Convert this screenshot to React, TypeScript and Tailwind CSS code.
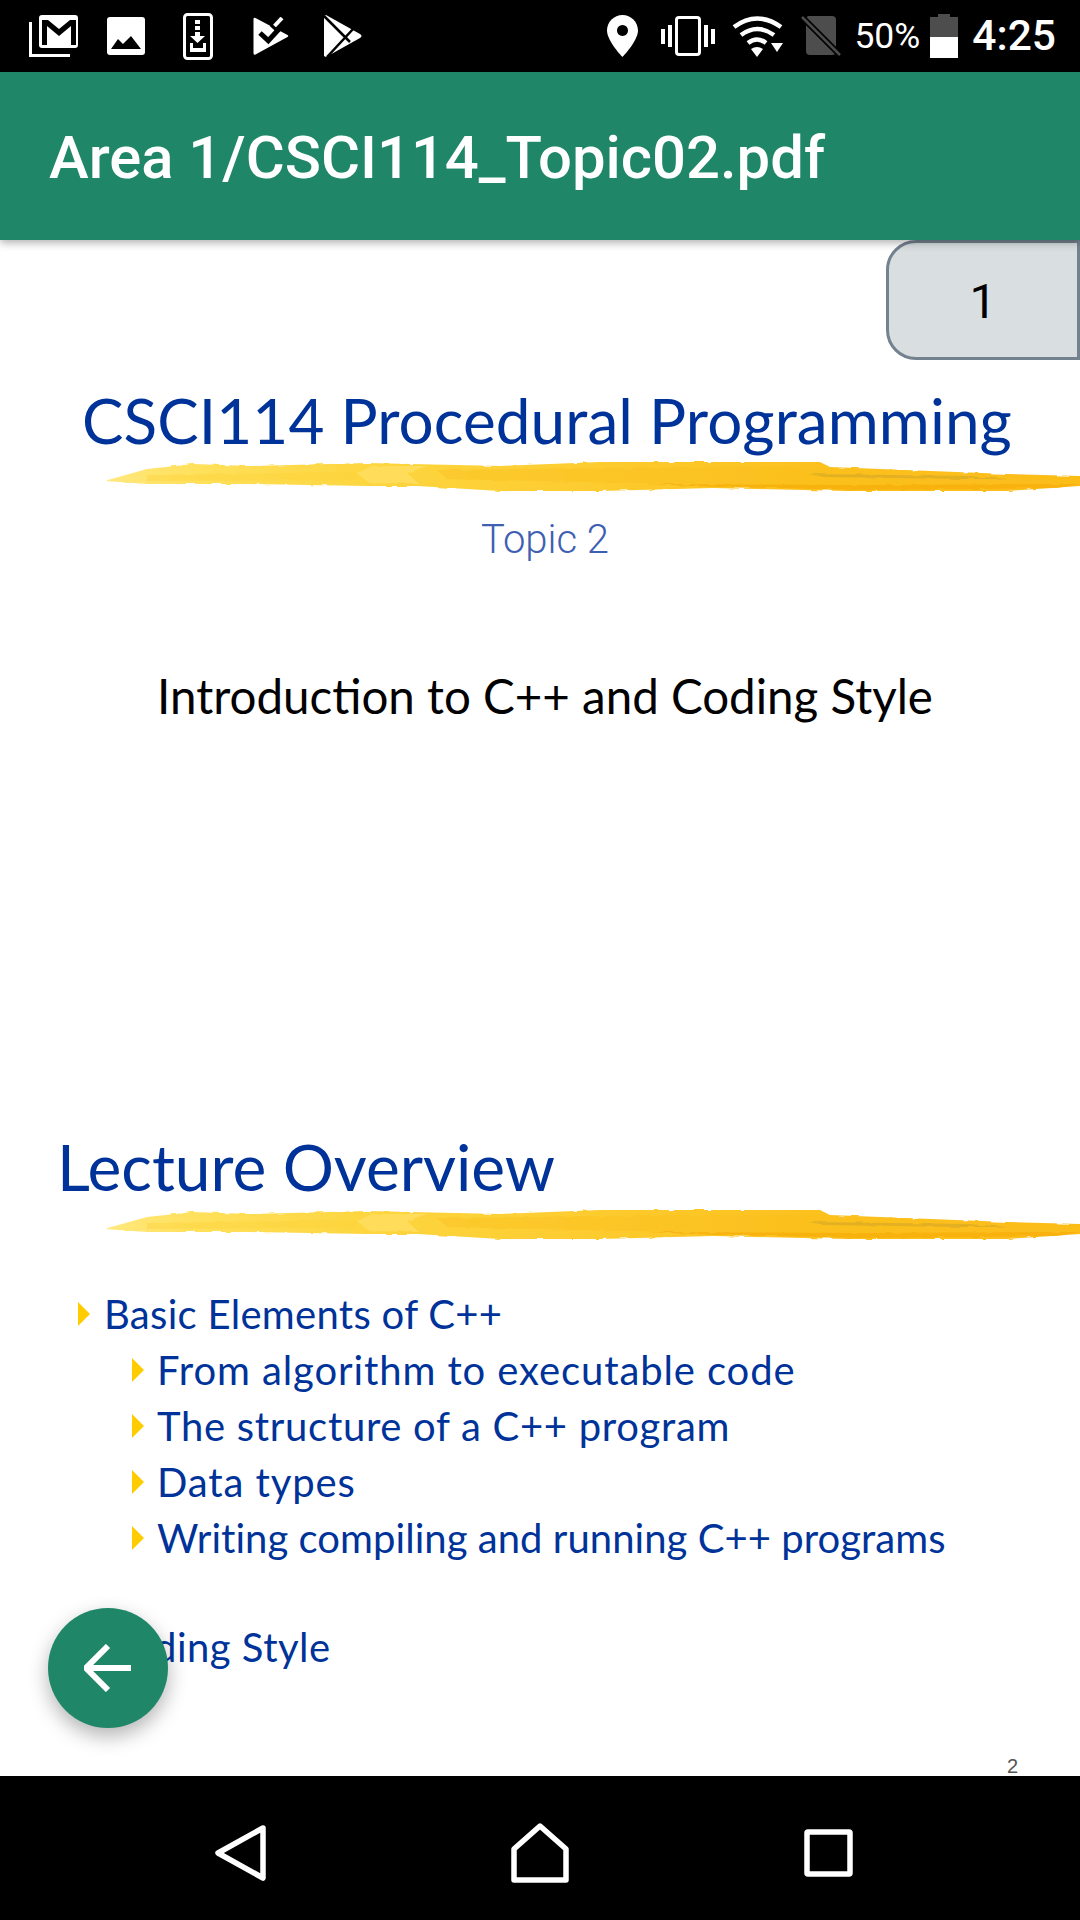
import React from "react";

const slideFont = { fontFamily: '"Lato", "Open Sans", sans-serif' };

function Brush({ id }: { id: string }) {
  return (
    <svg viewBox="0 0 973 36" className="block w-[973px] h-[36px] ml-auto shrink-0" preserveAspectRatio="none">
      <defs>
        <linearGradient id={`g${id}`} x1="0" x2="1" y1="0" y2="0">
          <stop offset="0" stopColor="#ffe87e" />
          <stop offset="0.1" stopColor="#ffe05a" />
          <stop offset="0.26" stopColor="#fdd640" />
          <stop offset="0.45" stopColor="#fdce33" />
          <stop offset="0.7" stopColor="#fcc220" />
          <stop offset="1" stopColor="#fcbc18" />
        </linearGradient>
        <filter id={`r${id}`} x="-2%" y="-30%" width="104%" height="160%">
          <feTurbulence type="fractalNoise" baseFrequency="0.07 0.3" numOctaves="2" seed="4" />
          <feDisplacementMap in="SourceGraphic" scale="3" />
        </filter>
      </defs>
      <g filter={`url(#r${id})`}>
        <path
          d="M-3 22 L40 10 L86 5 L143 7 L260 4 L393 7 L493 3 L713 3 L723 8 L900 15 L973 17 L973 27 L900 32 L740 32 L606 29 L493 32 L393 32 L310 27 L260 27 L143 25 L40 25 Z"
          fill={`url(#g${id})`}
        />
        <path d="M265 7 L250 14 L262 24 L312 25 L300 14 L320 7 Z" fill="#ffe067" opacity="0.7" />
        <path d="M40 16 L250 13 L250 21 L40 22 Z" fill="#fcd23a" opacity="0.45" />
        <path d="M330 11 L600 8 L715 8 L780 15 L973 21 L973 25 L760 26 L520 24 L340 20 Z" fill="#f9bf1c" opacity="0.4" />
        <path d="M540 25 L760 26 L973 25 L950 29 L760 31 L610 28 Z" fill="#f6ae0c" opacity="0.8" />
        <path d="M700 15 L860 17 L900 20 L860 20 L720 18 Z" fill="#c9a22a" opacity="0.5" />
      </g>
    </svg>
  );
}

function Tri() {
  return (
    <svg viewBox="0 0 12 24" className="w-[12px] h-[24px] shrink-0">
      <polygon points="0,0 12,12 0,24" fill="#ffcc00" />
    </svg>
  );
}

function Bullet({ level, text, tracking }: { level: 1 | 2; text: string; tracking: number }) {
  return (
    <div className={level === 1 ? "flex items-center h-[56px] pl-[78px] gap-[14px]" : "flex items-center h-[56px] pl-[132px] gap-[13px]"}>
      <Tri />
      <span
        className="text-[40px] leading-[56px] text-[#003399] whitespace-nowrap"
        style={{ ...slideFont, letterSpacing: `${tracking}px` }}
      >
        {text}
      </span>
    </div>
  );
}

function LeftIcons() {
  return (
    <div className="flex items-center">
      <svg viewBox="0 0 50 44" className="w-[50px] h-[44px]" fill="none">
        <path d="M1.5 8 V41.5 H41" stroke="#fff" strokeWidth="3" />
        <rect x="10" y="1" width="39" height="33" rx="3" fill="#fff" />
        <path d="M13 31 V6 H19 L30 15 L41 6 H47 V31 H42 V12 L30 22 L18 12 V31 Z" fill="#000" />
      </svg>
      <svg viewBox="0 0 38 38" className="w-[38px] h-[38px] ml-[28px]">
        <rect width="38" height="38" rx="3" fill="#fff" />
        <path d="M4 32 L11 22 L16 27 L24 19 L34 32 Z" fill="#000" />
      </svg>
      <svg viewBox="0 0 30 47" className="w-[30px] h-[47px] ml-[38px]" fill="none">
        <rect x="1.5" y="1.5" width="27" height="44" rx="3" stroke="#fff" strokeWidth="3" />
        <rect x="12" y="7" width="5" height="4" fill="#fff" />
        <rect x="12" y="13" width="5" height="4" fill="#fff" />
        <path d="M12 19 H17 V23 H22 L14.5 30 L7 23 H12 Z" fill="#fff" />
        <path d="M7 30 H10 V35 H20 V30 H23 V39 H7 Z" fill="#fff" />
      </svg>
      <svg viewBox="0 0 36 38" className="w-[36px] h-[38px] ml-[40px]" fill="none">
        <path d="M0.5 2 Q0.5 0 2.5 1 L34.5 18 Q36 19 34.5 20 L2.5 37.5 Q0.5 38.5 0.5 36 Z" fill="#fff" />
        <path d="M20 12 L32 -1" stroke="#000" strokeWidth="9" />
        <path d="M7 16 L15.3 23.7 L26 12" stroke="#000" strokeWidth="5" />
        <path d="M21.5 9 L29 1" stroke="#fff" strokeWidth="4" />
      </svg>
      <svg viewBox="0 0 39 42" className="w-[39px] h-[42px] ml-[34px]">
        <path d="M1 1 L3 0 L37 19 Q40 21 37 23 L3 42 L1 41 Z" fill="#fff" />
        <path d="M1 1 L27 27 M4 42 L31 13" stroke="#000" strokeWidth="2.5" />
      </svg>
    </div>
  );
}

function RightIcons() {
  return (
    <div className="flex items-center">
      <svg viewBox="0 0 31 42" className="w-[31px] h-[42px]">
        <path fillRule="evenodd" d="M15.5 0 C7 0 0 7 0 15.5 C0 26 15.5 42 15.5 42 C15.5 42 31 26 31 15.5 C31 7 24 0 15.5 0 Z M15.5 10 A5.5 5.5 0 1 1 15.49 10 Z" fill="#fff" />
      </svg>
      <svg viewBox="0 0 54 40" className="w-[54px] h-[40px] ml-[23px]" fill="none">
        <rect x="0" y="13" width="4" height="15" fill="#fff" />
        <rect x="7" y="9" width="4" height="22" fill="#fff" />
        <rect x="15.5" y="1.5" width="23" height="37" rx="2.5" stroke="#fff" strokeWidth="3" />
        <rect x="43" y="9" width="4" height="22" fill="#fff" />
        <rect x="50" y="13" width="4" height="15" fill="#fff" />
      </svg>
      <svg viewBox="0 0 51 41" className="w-[51px] h-[41px] ml-[17px]" fill="none">
        <path d="M2 11 Q25 -6 49 11" stroke="#fff" strokeWidth="4.5" />
        <path d="M9 19 Q25 7 42 19" stroke="#fff" strokeWidth="4.5" />
        <path d="M16 27 Q25 20 34 27" stroke="#fff" strokeWidth="4.5" />
        <path d="M19 33 Q25 29 31 33 L25 41 Z" fill="#fff" />
        <path d="M39 27 H51 L45 36 Z" fill="#fff" />
      </svg>
      <svg viewBox="0 0 40 42" className="w-[40px] h-[42px] ml-[18px]" fill="none">
        <path d="M7 1 H31 Q35 1 35 5 V36 Q35 40 31 40 H9 Q5 40 5 36 V3 Z" fill="#4d4d4d" />
        <path d="M1 2 L39 40" stroke="#000" strokeWidth="6" />
        <path d="M1 2 L39 40" stroke="#4d4d4d" strokeWidth="2.5" />
      </svg>
      <span className="ml-[13px] text-[35.5px] leading-[40px] text-white whitespace-nowrap" style={{ fontFamily: "Roboto, sans-serif" }}>
        50%
      </span>
      <svg viewBox="0 0 28 44" className="w-[28px] h-[44px] ml-[10px]">
        <path d="M8 0 H20 V3 H28 V23 H0 V3 H8 Z" fill="#4d4d4d" />
        <rect x="0" y="23" width="28" height="21" fill="#fff" />
      </svg>
      <span className="ml-[14px] text-[42.5px] leading-[44px] font-medium text-white whitespace-nowrap" style={{ fontFamily: "Roboto, sans-serif" }}>
        4:25
      </span>
    </div>
  );
}

export default function App() {
  return (
    <div className="relative flex flex-col w-[1080px] h-[1920px] bg-white overflow-hidden">
      <div className="flex items-center justify-between h-[72px] pl-[29px] pr-[24px] bg-black shrink-0">
        <LeftIcons />
        <RightIcons />
      </div>
      <div className="relative z-10 flex items-center h-[168px] pl-[49px] pt-[4px] bg-[#1f8668] shrink-0 shadow-[0_3px_8px_rgba(0,0,0,0.3)]">
        <span className="text-[59.8px] leading-[70px] font-medium text-white whitespace-nowrap" style={{ fontFamily: "Roboto, sans-serif" }}>
          Area 1/CSCI114_Topic02.pdf
        </span>
      </div>

      <main className="relative flex flex-col flex-1 min-h-0">
        <div className="absolute top-0 right-0 z-0 flex items-center justify-center w-[194px] h-[120px] pt-[3px] rounded-l-[30px] border-[3px] border-[#74828f] bg-[#d9dfe1] text-[48px] text-black" style={{ fontFamily: "Roboto, sans-serif" }}>
          1
        </div>

        <div className="mt-[142px] h-[77px] text-center pl-[14px] text-[62px] leading-[77px] tracking-[0.1px] text-[#003399] whitespace-nowrap" style={slideFont}>
          CSCI114 Procedural Programming
        </div>
        <Brush id="a" />
        <div className="mt-[22px] h-[46px] text-center pl-[10px] text-[40px] leading-[46px] font-light text-[#3f5fb3]" style={{ fontFamily: "Roboto, sans-serif" }}>
          Topic 2
        </div>
        <div className="mt-[103px] h-[60px] text-center pl-[10px] text-[47.5px] leading-[60px] text-black whitespace-nowrap" style={slideFont}>
          Introduction to C++ and Coding Style
        </div>
        <div className="mt-[404px] h-[74px] pl-[57px] text-[64px] leading-[74px] text-[#003399] whitespace-nowrap" style={slideFont}>
          Lecture Overview
        </div>
        <div className="mt-[3px]">
          <Brush id="b" />
        </div>
        <div className="mt-[43px]">
          <Bullet level={1} text="Basic Elements of C++" tracking={0.3} />
          <Bullet level={2} text="From algorithm to executable code" tracking={0.9} />
          <Bullet level={2} text="The structure of a C++ program" tracking={0.7} />
          <Bullet level={2} text="Data types" tracking={0.9} />
          <Bullet level={2} text="Writing compiling and running C++ programs" tracking={0.05} />
          <div className="mt-[53px]">
            <Bullet level={1} text="Coding Style" tracking={0.5} />
          </div>
        </div>
        <div className="mt-auto h-[20px] pr-[62px] text-right text-[20px] leading-[20px] text-[#555]" style={{ fontFamily: '"Liberation Sans", sans-serif' }}>
          2
        </div>

        <div className="absolute left-[48px] top-[1368px] flex items-center justify-center w-[120px] h-[120px] rounded-full bg-[#1f8668] shadow-[0_8px_20px_rgba(0,0,0,0.3)]">
          <svg viewBox="0 0 48 48" className="w-[48px] h-[48px]" fill="none">
            <path d="M47 24 H3 M24 2 L2 24 L24 46" stroke="#fff" strokeWidth="6" />
          </svg>
        </div>
      </main>

      <div className="flex items-center h-[144px] pl-[215px] pt-[10px] bg-black shrink-0">
        <svg viewBox="0 0 51 56" className="w-[51px] h-[56px] mr-[245px]" fill="none">
          <path d="M48 3 L3 28 L48 53 Z" stroke="#fff" strokeWidth="5.5" strokeLinejoin="round" />
        </svg>
        <svg viewBox="0 0 58 60" className="w-[58px] h-[60px] mr-[235px]" fill="none">
          <path d="M29 3 L55 26 V57 H3 V26 Z" stroke="#fff" strokeWidth="5.5" strokeLinejoin="round" />
        </svg>
        <svg viewBox="0 0 49 48" className="w-[49px] h-[48px]" fill="none">
          <rect x="3" y="3" width="43" height="42" rx="1" stroke="#fff" strokeWidth="5.5" />
        </svg>
      </div>
    </div>
  );
}
